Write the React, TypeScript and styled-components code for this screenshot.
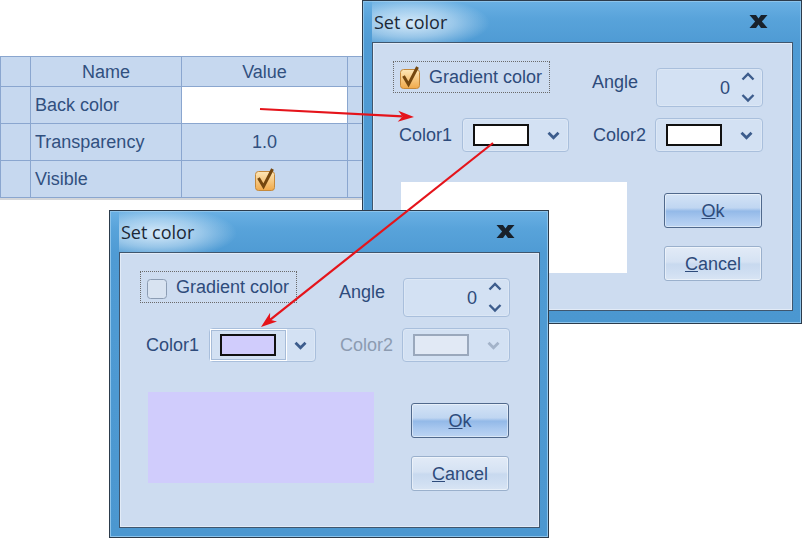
import React from "react";
import styled, { createGlobalStyle } from "styled-components";

const GlobalStyle = createGlobalStyle`
  html, body { margin: 0; padding: 0; background: #ffffff; }
  body { font-family: "Liberation Sans", Arial, sans-serif; }
  * { box-sizing: border-box; }
`;

const Desktop = styled.div`
  position: relative;
  width: 804px;
  height: 540px;
  overflow: hidden;
  background: #ffffff;
`;

/* ---------- property grid ---------- */
const Grid = styled.div`
  position: absolute;
  left: 0;
  top: 56px;
  display: grid;
  grid-template-columns: 30px 151px 166px 40px;
  grid-template-rows: 30px 37px 37px 37px;
  border-top: 1px solid #8aa6cf;
  border-left: 1px solid #8aa6cf;
  background: #c6d8ef;
  box-shadow: 0 2px 0 #d3d6da;
  color: #31507f;
  font-size: 18px;
`;

const Cell = styled.div<{ $center?: boolean; $white?: boolean }>`
  border-right: 1px solid #8aa6cf;
  border-bottom: 1px solid #8aa6cf;
  display: flex;
  align-items: center;
  justify-content: ${(p) => (p.$center ? "center" : "flex-start")};
  padding-left: ${(p) => (p.$center ? 0 : 4)}px;
  background: ${(p) => (p.$white ? "#ffffff" : "transparent")};
  white-space: nowrap;
  line-height: 20px;
`;

/* ---------- window ---------- */
const Window = styled.div<{ $x: number; $y: number; $pb: number }>`
  position: absolute;
  left: ${(p) => p.$x}px;
  top: ${(p) => p.$y}px;
  width: 440px;
  border: 1px solid #2c3b4b;
  padding: 0 8px ${(p) => p.$pb}px 9px;
  background: linear-gradient(
    to bottom,
    #6ab0e3 0px,
    #58a3da 18px,
    #4f9bd4 42px,
    #4b97d0 100%
  );
  box-shadow: inset 0 0 0 1px #8cc3ea;
  display: flex;
  flex-direction: column;
`;

const TitleBar = styled.div`
  height: 41px;
  display: flex;
  align-items: center;
  justify-content: space-between;
  padding: 0 25px 0 2px;
  background: radial-gradient(
    ellipse 80px 26px at 38px 22px,
    rgba(236, 246, 255, 0.85) 0%,
    rgba(236, 246, 255, 0.45) 55%,
    rgba(236, 246, 255, 0) 100%
  );
`;

const Title = styled.span`
  font-family: "Open Sans", "Noto Sans", sans-serif;
  font-size: 18px;
  color: #1b2836;
  line-height: 22px;
`;

const Client = styled.div<{ $h: number }>`
  height: ${(p) => p.$h}px;
  border: 1px solid #3f566e;
  background: #cddcf0;
  box-shadow: inset 0 0 0 1px #e2ebf7;
  padding: 18px 29px 0 20px;
  display: flex;
  flex-direction: column;
  color: #2e4b7b;
  font-size: 18px;
  line-height: 20px;
`;

const TopRow = styled.div`
  display: grid;
  grid-template-columns: 157px 106px 107px;
  align-items: start;
`;

const CheckGroup = styled.div`
  height: 32px;
  border: 1px dotted #6a6a6a;
  display: flex;
  align-items: center;
  gap: 8px;
  padding-left: 5px;
  white-space: nowrap;
`;

const Label = styled.span<{ $pad?: number; $top?: number; $disabled?: boolean }>`
  padding-left: ${(p) => p.$pad ?? 0}px;
  margin-top: ${(p) => p.$top ?? 0}px;
  color: ${(p) => (p.$disabled ? "#8c9bb1" : "#2e4b7b")};
  white-space: nowrap;
`;

const BoxBase = styled.div`
  border: 1px solid #a9bfdc;
  border-radius: 4px;
  background: #d3e1f3;
  box-shadow: inset 0 0 0 1px #dce7f5;
`;

const Spin = styled(BoxBase)`
  margin-top: 7px;
  height: 39px;
  display: flex;
  align-items: center;
  justify-content: flex-end;
  padding-right: 3px;
`;

const SpinValue = styled.span`
  margin-right: 7px;
`;

const MidRow = styled.div`
  margin-top: 11px;
  display: grid;
  grid-template-columns: 69px 107px 86px 108px;
  align-items: center;
  height: 34px;
`;

const Combo = styled(BoxBase)`
  height: 34px;
  display: flex;
  align-items: stretch;
`;

const SwatchArea = styled.div<{ $focus?: boolean }>`
  width: 77px;
  display: flex;
  align-items: center;
  padding-left: 9px;
  border: 1px solid ${(p) => (p.$focus ? "#ffffff" : "transparent")};
  box-shadow: ${(p) => (p.$focus ? "inset 0 0 0 1px #a7bcd8" : "none")};
`;

const Swatch = styled.div<{ $color: string; $disabled?: boolean }>`
  width: 56px;
  height: 22px;
  background: ${(p) => p.$color};
  border: 2px solid ${(p) => (p.$disabled ? "#9aa8bc" : "#111111")};
`;

const ChevronArea = styled.div`
  flex: 1;
  display: flex;
  align-items: center;
  justify-content: center;
  padding-right: 2px;
`;

const BottomRow = styled.div`
  margin-top: 30px;
  display: flex;
  align-items: flex-start;
`;

const Preview = styled.div<{ $color: string }>`
  margin-left: 8px;
  width: 226px;
  height: 91px;
  background: ${(p) => p.$color};
`;

const Buttons = styled.div`
  margin-left: 37px;
  margin-top: 11px;
  display: flex;
  flex-direction: column;
  gap: 18px;
`;

const Button = styled.div<{ $primary?: boolean }>`
  width: 98px;
  height: 35px;
  border-radius: 3px;
  display: flex;
  align-items: center;
  justify-content: center;
  color: #2e4b7b;
  border: 1px solid ${(p) => (p.$primary ? "#50698c" : "#9ab0cc")};
  box-shadow: inset 0 0 0 1px rgba(255, 255, 255, 0.45);
  background: ${(p) =>
    p.$primary
      ? "linear-gradient(to bottom, #d3e3f6 0%, #c0d6f1 42%, #93b9e8 52%, #a9c8ef 75%, #bcd4f2 100%)"
      : "linear-gradient(to bottom, #e2ebf7 0%, #d5e2f3 45%, #c8d9ef 52%, #d0dff2 80%, #d9e5f4 100%)"};
`;

const Arrows = styled.svg`
  position: absolute;
  left: 0;
  top: 0;
  pointer-events: none;
`;

/* ---------- icons ---------- */
function CheckBoxIcon({ checked }: { checked: boolean }) {
  if (!checked) {
    return (
      <svg width="22" height="25" viewBox="0 0 22 25">
        <rect x="1.5" y="4.5" width="19" height="19" rx="3" fill="#d8e3f1" stroke="#8c9db4" />
      </svg>
    );
  }
  return (
    <svg width="22" height="25" viewBox="0 0 22 25">
      <defs>
        <linearGradient id="cbFill" x1="0" y1="0" x2="0" y2="1">
          <stop offset="0" stopColor="#fde7b8" />
          <stop offset="1" stopColor="#f0a94a" />
        </linearGradient>
      </defs>
      <rect x="1.5" y="4.5" width="19" height="19" rx="3" fill="url(#cbFill)" stroke="#c4893c" />
      <polyline
        points="4.5,11 9.5,19.5 18.5,2"
        fill="none"
        stroke="#74470f"
        strokeWidth="3"
        strokeLinejoin="miter"
      />
    </svg>
  );
}

function CloseIcon() {
  return (
    <svg width="19" height="15" viewBox="0 0 19 15">
      <path
        d="M0.5 1 H7 L9.5 4.6 L12 1 H18.5 L12.9 7.5 L18.5 14 H12 L9.5 10.4 L7 14 H0.5 L6.1 7.5 Z"
        fill="#18212b"
      />
    </svg>
  );
}

function ComboChevron({ disabled }: { disabled?: boolean }) {
  return (
    <svg width="13" height="9" viewBox="0 0 13 9">
      <polyline
        points="1.5,1.8 6.5,6.8 11.5,1.8"
        fill="none"
        stroke={disabled ? "#a3b3c9" : "#3c5c8c"}
        strokeWidth="2.8"
      />
    </svg>
  );
}

function SpinArrows() {
  return (
    <svg width="22" height="37" viewBox="0 0 22 37">
      <polyline points="5.5,10.5 11,5 16.5,10.5" fill="none" stroke="#3c5c8c" strokeWidth="2.4" />
      <polyline points="5.5,26 11,31.5 16.5,26" fill="none" stroke="#3c5c8c" strokeWidth="2.4" />
    </svg>
  );
}

function RedArrow({ x1, y1, x2, y2 }: { x1: number; y1: number; x2: number; y2: number }) {
  const dx = x2 - x1;
  const dy = y2 - y1;
  const len = Math.hypot(dx, dy);
  const ux = dx / len;
  const uy = dy / len;
  const nx = -uy;
  const ny = ux;
  const hl = 16;
  const hw = 5.5;
  const bx = x2 - ux * hl;
  const by = y2 - uy * hl;
  const mx = x2 - ux * hl * 0.72;
  const my = y2 - uy * hl * 0.72;
  const pts = [
    [x2, y2],
    [bx + nx * hw, by + ny * hw],
    [mx, my],
    [bx - nx * hw, by - ny * hw],
  ]
    .map((p) => p.map((v) => v.toFixed(1)).join(","))
    .join(" ");
  return (
    <g>
      <line x1={x1} y1={y1} x2={mx} y2={my} stroke="#e5141b" strokeWidth="2.2" />
      <polygon points={pts} fill="#e5141b" />
    </g>
  );
}

/* ---------- dialog ---------- */
type DialogProps = {
  x: number;
  y: number;
  clientH: number;
  pb: number;
  gradient: boolean;
  color1: string;
  color2: string;
  preview: string;
  focusColor1?: boolean;
};

function ColorDialog(p: DialogProps) {
  return (
    <Window $x={p.x} $y={p.y} $pb={p.pb}>
      <TitleBar>
        <Title>Set color</Title>
        <CloseIcon />
      </TitleBar>
      <Client $h={p.clientH}>
        <TopRow>
          <CheckGroup>
            <CheckBoxIcon checked={p.gradient} />
            <span>Gradient color</span>
          </CheckGroup>
          <Label $pad={42} $top={11}>
            Angle
          </Label>
          <Spin>
            <SpinValue>0</SpinValue>
            <SpinArrows />
          </Spin>
        </TopRow>
        <MidRow>
          <Label $pad={6}>Color1</Label>
          <Combo>
            <SwatchArea $focus={p.focusColor1}>
              <Swatch $color={p.color1} />
            </SwatchArea>
            <ChevronArea>
              <ComboChevron />
            </ChevronArea>
          </Combo>
          <Label $pad={24} $disabled={!p.gradient}>
            Color2
          </Label>
          <Combo>
            <SwatchArea>
              <Swatch $color={p.color2} $disabled={!p.gradient} />
            </SwatchArea>
            <ChevronArea>
              <ComboChevron disabled={!p.gradient} />
            </ChevronArea>
          </Combo>
        </MidRow>
        <BottomRow>
          <Preview $color={p.preview} />
          <Buttons>
            <Button $primary>
              <span>
                <u>O</u>k
              </span>
            </Button>
            <Button>
              <span>
                <u>C</u>ancel
              </span>
            </Button>
          </Buttons>
        </BottomRow>
      </Client>
    </Window>
  );
}

export default function App() {
  return (
    <Desktop>
      <GlobalStyle />
      <Grid>
        <Cell />
        <Cell $center>Name</Cell>
        <Cell $center>Value</Cell>
        <Cell />

        <Cell />
        <Cell>Back color</Cell>
        <Cell $white />
        <Cell />

        <Cell />
        <Cell>Transparency</Cell>
        <Cell $center>1.0</Cell>
        <Cell />

        <Cell />
        <Cell>Visible</Cell>
        <Cell $center>
          <CheckBoxIcon checked />
        </Cell>
        <Cell />
      </Grid>

      <ColorDialog
        x={362}
        y={0}
        clientH={269}
        pb={12}
        gradient
        color1="#ffffff"
        color2="#ffffff"
        preview="#ffffff"
      />
      <ColorDialog
        x={109}
        y={210}
        clientH={276}
        pb={9}
        gradient={false}
        color1="#d0ccfc"
        color2="#e1e9f5"
        preview="#d0ccfc"
        focusColor1
      />

      <Arrows width="804" height="540" viewBox="0 0 804 540">
        <RedArrow x1={260} y1={109} x2={414} y2={117} />
        <RedArrow x1={493} y1={143} x2={261} y2={327} />
      </Arrows>
    </Desktop>
  );
}
